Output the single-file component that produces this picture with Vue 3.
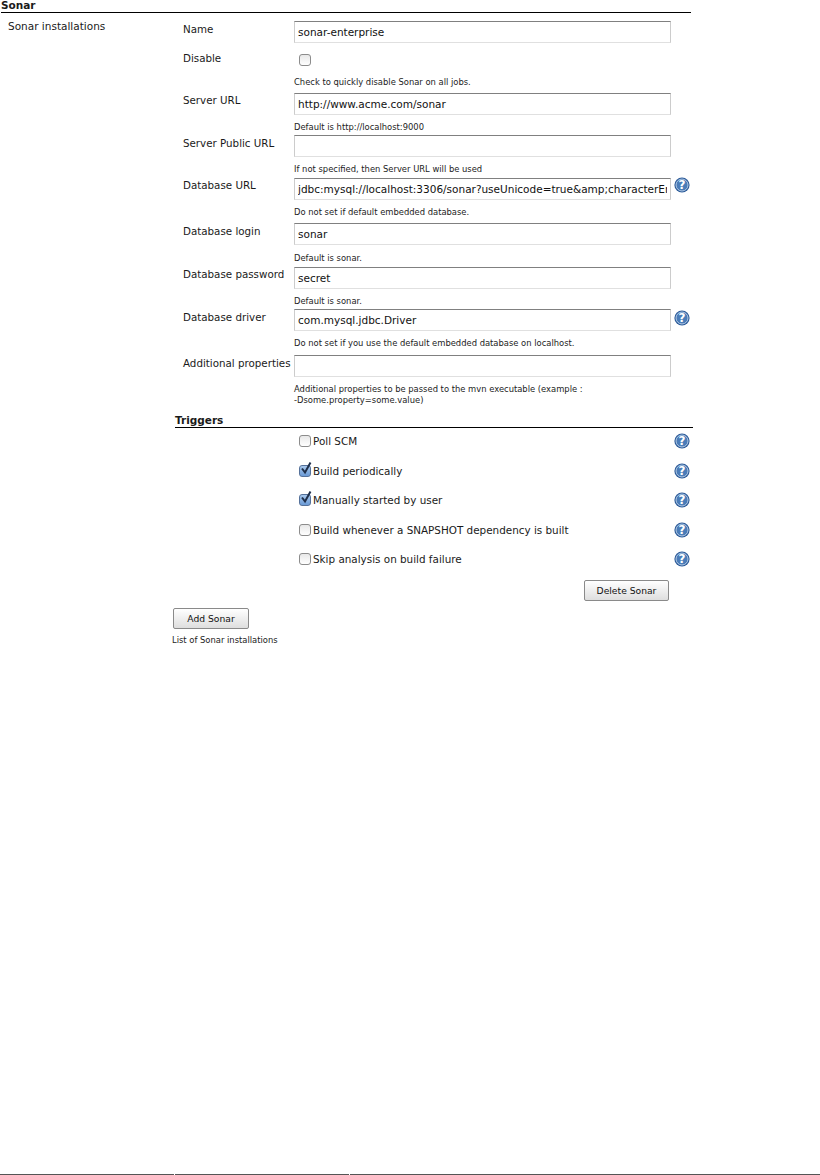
<script setup>
const fields = [
  { id: 'name', label: 'Name', value: 'sonar-enterprise' },
  { id: 'disable', label: 'Disable', checkbox: true, hint: 'Check to quickly disable Sonar on all jobs.' },
  { id: 'url', label: 'Server URL', value: 'http://www.acme.com/sonar', hint: 'Default is http://localhost:9000' },
  { id: 'public', label: 'Server Public URL', value: '', hint: 'If not specified, then Server URL will be used' },
  { id: 'db', label: 'Database URL', value: 'jdbc:mysql://localhost:3306/sonar?useUnicode=true&amp;characterEncoding=utf8', help: true, hint: 'Do not set if default embedded database.' },
  { id: 'login', label: 'Database login', value: 'sonar', hint: 'Default is sonar.' },
  { id: 'pass', label: 'Database password', value: 'secret', hint: 'Default is sonar.' },
  { id: 'driver', label: 'Database driver', value: 'com.mysql.jdbc.Driver', help: true, hint: 'Do not set if you use the default embedded database on localhost.' },
  { id: 'props', label: 'Additional properties', value: '', hint: 'Additional properties to be passed to the mvn executable (example : -Dsome.property=some.value)' },
]
const triggers = [
  { label: 'Poll SCM', on: false },
  { label: 'Build periodically', on: true },
  { label: 'Manually started by user', on: true },
  { label: 'Build whenever a SNAPSHOT dependency is built', on: false },
  { label: 'Skip analysis on build failure', on: false },
]
</script>

<template>
  <div class="page">
    <h2 class="section">Sonar</h2>
    <div class="install">
      <div class="install-title">Sonar installations</div>
      <div class="install-body">
        <div class="fields">
          <div v-for="f in fields" :key="f.id" class="field" :class="'f-' + f.id">
            <div class="label">{{ f.label }}</div>
            <div class="control">
              <span v-if="f.checkbox" class="check"></span>
              <input v-else class="text" type="text" :value="f.value" readonly />
              <div v-if="f.hint" class="hint">{{ f.hint }}</div>
            </div>
            <svg v-if="f.help" class="help" viewBox="0 0 16 16">
              <circle cx="8" cy="8" r="7.6" fill="#2b5a98" />
              <circle cx="8" cy="8" r="6" fill="#4a7cb8" stroke="#b4cbe6" stroke-width="1" />
              <text x="8" y="12.4" text-anchor="middle" class="q">?</text>
            </svg>
          </div>
        </div>

        <h3 class="triggers-title">Triggers</h3>
        <div class="triggers">
          <div v-for="t in triggers" :key="t.label" class="trigger">
            <span class="check" :class="{ on: t.on }">
              <svg v-if="t.on" class="tick" viewBox="0 0 14 14">
                <path d="M3 6.5 L6 10.5 L11.5 0.5" fill="none" stroke="#1f2f4a" stroke-width="2" />
              </svg>
            </span>
            <span class="trigger-label">{{ t.label }}</span>
            <svg class="help" viewBox="0 0 16 16">
              <circle cx="8" cy="8" r="7.6" fill="#2b5a98" />
              <circle cx="8" cy="8" r="6" fill="#4a7cb8" stroke="#b4cbe6" stroke-width="1" />
              <text x="8" y="12.4" text-anchor="middle" class="q">?</text>
            </svg>
          </div>
        </div>

        <div class="delete-row"><button class="btn del">Delete Sonar</button></div>
        <button class="btn add">Add Sonar</button>
        <div class="list-hint">List of Sonar installations</div>
      </div>
    </div>
    <div class="footer-rule"><i></i><i></i><i></i></div>
  </div>
</template>

<style scoped>
.page {
  min-height: 1175px;
  box-sizing: border-box;
  display: flex;
  flex-direction: column;
  font-family: "DejaVu Sans", Verdana, sans-serif;
  color: #1a1a1a;
  font-size: 10.5px;
}
.section {
  margin: 0 129px 0 1px;
  height: 12px;
  line-height: 11px;
  font-size: 10.5px;
  font-weight: bold;
  border-bottom: 1px solid #000;
}
.install { display: flex; }
.install-title { width: 173px; padding: 6px 0 0 8px; box-sizing: border-box; line-height: 14px; flex: none; }
.install-body { width: 520px; flex: none; }
.fields { padding-top: 8px; }
.field { display: flex; align-items: flex-start; padding-left: 10px; position: relative; }
.label { width: 111px; flex: none; line-height: 14px; padding-top: 1px; white-space: nowrap; font-size: 10.3px; }
.control { width: 377px; flex: none; }
.text {
  display: block;
  width: 377px;
  height: 22px;
  box-sizing: border-box;
  padding: 1px 3px;
  border: 1px solid #ccc;
  border-top-color: #808080;
  border-bottom-color: #e0e0e0;
  background: #fff;
  color: #111;
  font: 10.5px "DejaVu Sans", Verdana, sans-serif;
  outline: none;
}
.hint { font-size: 8.4px; line-height: 11px; color: #222; margin-top: 7px; }
.help { width: 16px; height: 16px; flex: none; margin-left: 3px; }
.q { font: bold 12px "DejaVu Sans", sans-serif; fill: #fff; }
.f-disable { margin-top: 8px; }
.f-disable .check { margin: 3px 0 0 5px; display: block; }
.f-disable .hint { margin-top: 11px; }
.f-disable .label { padding-top: 0; }
.f-url { margin-top: 5px; }
.f-url .label, .f-db .label, .f-pass .label { padding-top: 0; }
.f-public { margin-top: 2px; }
.f-db { margin-top: 3px; }
.f-login { margin-top: 5px; }
.f-login .hint { margin-top: 8px; }
.f-pass { margin-top: 3px; }
.f-pass .hint { margin-top: 7px; }
.f-driver { margin-top: 2px; }
.f-props { margin-top: 6px; }
.f-props .hint { margin-top: 7px; width: 291px; }
.f-db .help { margin-top: -1px; }
.f-driver .help { margin-top: 0.5px; }
.check {
  display: inline-block;
  width: 10px;
  height: 10px;
  border: 1px solid #8c8c8c;
  border-radius: 3px;
  background: linear-gradient(#e8e8e8, #fff);
  position: relative;
  flex: none;
}
.check.on { background: linear-gradient(#a8c8ec, #6a9ad6); border-color: #55719a; }
.tick { position: absolute; left: -1px; top: -4px; width: 14px; height: 14px; }
.triggers-title {
  margin: 9px 0 0 2px;
  height: 12px;
  width: 518px;
  line-height: 11px;
  font-size: 10.5px;
  font-weight: bold;
  border-bottom: 1px solid #000;
}
.triggers { padding-top: 3px; display: flex; flex-direction: column; gap: 9.5px; }
.trigger { display: flex; align-items: center; height: 20px; padding: 0 3px 0 126px; }
.trigger-label { margin-left: 2px; flex: 1; font-size: 10.4px; }
.delete-row { display: flex; justify-content: flex-end; padding: 11px 24px 0 0; }
.btn {
  box-sizing: border-box;
  height: 21px;
  padding: 0;
  border: 1px solid #8a8a8a;
  border-radius: 2px;
  background: linear-gradient(#fff, #dedede);
  color: #111;
  font: 9.2px "DejaVu Sans", Verdana, sans-serif;
}
.del { width: 85px; }
.add { width: 76px; margin: 7px 0 0 0; display: block; }
.list-hint { font-size: 8.4px; line-height: 11px; margin: 6px 0 0 -1px; }
.footer-rule { margin-top: auto; display: flex; height: 1px; gap: 1px; }
.footer-rule i { display: block; background: #555; height: 1px; }
.footer-rule i:nth-child(1), .footer-rule i:nth-child(2) { width: 174px; }
.footer-rule i:nth-child(3) { flex: 1; }
</style>
